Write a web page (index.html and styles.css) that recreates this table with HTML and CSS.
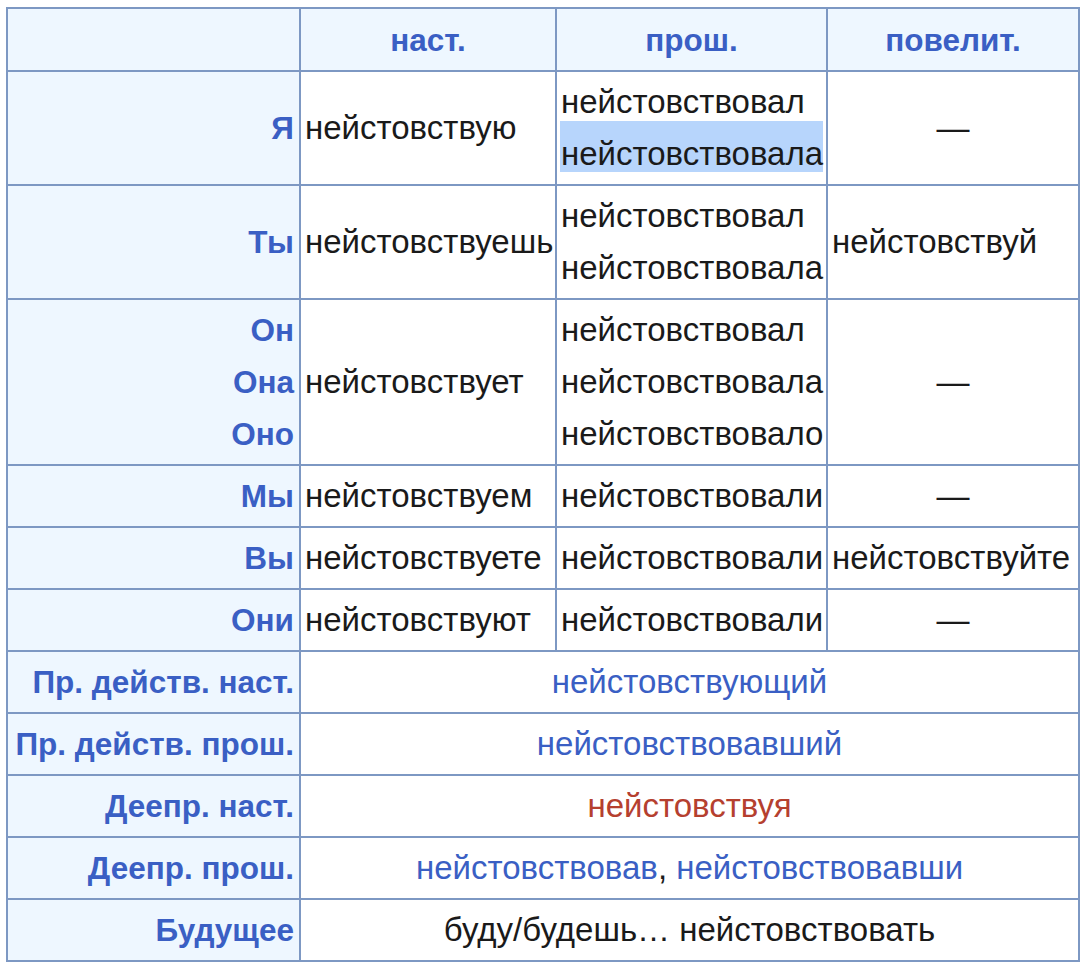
FILE: index.html
```html
<!DOCTYPE html>
<html lang="ru">
<head>
<meta charset="utf-8">
<title>нейстовствовать</title>
<link rel="stylesheet" href="styles.css">
</head>
<body>
<table class="conj">
  <colgroup>
    <col class="c1"><col class="c2"><col class="c3"><col class="c4">
  </colgroup>
  <tr class="head">
    <th></th>
    <th>наст.</th>
    <th>прош.</th>
    <th>повелит.</th>
  </tr>
  <tr>
    <th class="pron">Я</th>
    <td>нейстовствую</td>
    <td>нейстовствовал<br><span class="sel">нейстовствовала</span></td>
    <td class="center">—</td>
  </tr>
  <tr>
    <th class="pron">Ты</th>
    <td>нейстовствуешь</td>
    <td>нейстовствовал<br>нейстовствовала</td>
    <td>нейстовствуй</td>
  </tr>
  <tr>
    <th class="pron">Он<br>Она<br>Оно</th>
    <td>нейстовствует</td>
    <td>нейстовствовал<br>нейстовствовала<br>нейстовствовало</td>
    <td class="center">—</td>
  </tr>
  <tr>
    <th class="pron">Мы</th>
    <td>нейстовствуем</td>
    <td>нейстовствовали</td>
    <td class="center">—</td>
  </tr>
  <tr>
    <th class="pron">Вы</th>
    <td>нейстовствуете</td>
    <td>нейстовствовали</td>
    <td>нейстовствуйте</td>
  </tr>
  <tr>
    <th class="pron">Они</th>
    <td>нейстовствуют</td>
    <td>нейстовствовали</td>
    <td class="center">—</td>
  </tr>
  <tr>
    <th class="pron">Пр. действ. наст.</th>
    <td colspan="3" class="center"><span class="link">нейстовствующий</span></td>
  </tr>
  <tr>
    <th class="pron">Пр. действ. прош.</th>
    <td colspan="3" class="center"><span class="link">нейстовствовавший</span></td>
  </tr>
  <tr>
    <th class="pron">Деепр. наст.</th>
    <td colspan="3" class="center"><span class="redlink">нейстовствуя</span></td>
  </tr>
  <tr>
    <th class="pron">Деепр. прош.</th>
    <td colspan="3" class="center"><span class="link">нейстовствовав</span>, <span class="link">нейстовствовавши</span></td>
  </tr>
  <tr>
    <th class="pron">Будущее</th>
    <td colspan="3" class="center">буду/будешь… нейстовствовать</td>
  </tr>
</table>
</body>
</html>
```

FILE: styles.css
```css
html, body {
  background: #ffffff;
}
body {
  margin: 7px 0 0 6px;
  font-family: "Liberation Sans", Arial, sans-serif;
  font-size: 33px;
  color: #1a1a1a;
}
.conj {
  border-collapse: collapse;
  table-layout: fixed;
  width: 1072px;
  border: 2px solid #7d98c3;
}
.c1 { width: 293px; }
.c2 { width: 256px; }
.c3 { width: 271px; }
.c4 { width: 252px; }
.conj th,
.conj td {
  border: 2px solid #7d98c3;
  padding: 4px 4px;
  line-height: 52px;
  vertical-align: middle;
  white-space: nowrap;
  overflow: visible;
}
.conj th {
  background: #eef7ff;
  color: #3a5fc4;
  font-weight: bold;
  font-size: 31.5px;
}
.head th {
  text-align: center;
  padding-top: 5px;
  padding-bottom: 4px;
}
.conj th.pron {
  text-align: right;
  padding-right: 5px;
}
.conj td {
  text-align: left;
  background: #ffffff;
}
.conj td.center {
  text-align: center;
}
.sel {
  display: inline-block;
  background: #b7d5fc;
  line-height: 37px;
  padding-top: 14px;
  margin-top: -14px;
  margin-left: -1px;
  padding-left: 1px;
}
.link {
  color: #3a5fc4;
}
.redlink {
  color: #b5402f;
}
```
